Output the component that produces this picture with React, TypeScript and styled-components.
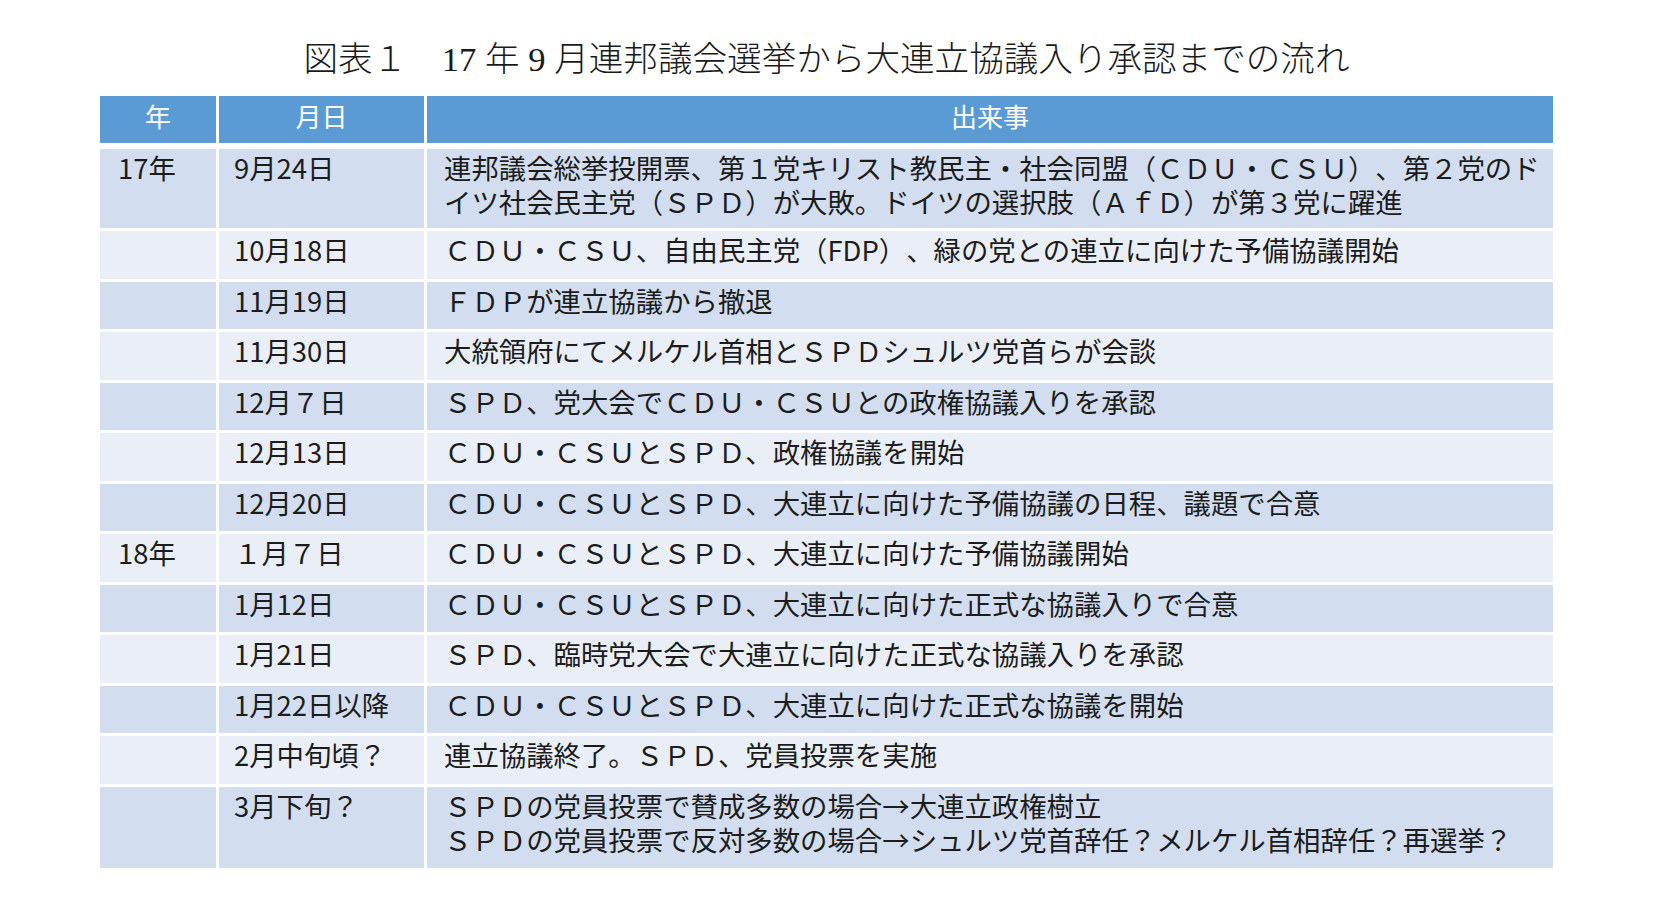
import styled, { createGlobalStyle } from "styled-components";

const GlobalStyle = createGlobalStyle`
  body {
    margin: 0;
    background: #ffffff;
  }
`

const Page = styled.div`
  width: 1658px;
  height: 908px;
  box-sizing: border-box;
  padding: 39px 105px 0 100px;
  background: #ffffff;
  font-family: "Noto Sans CJK JP", "Noto Sans", sans-serif;
  text-spacing-trim: space-all;
`

const Title = styled.h1`
  margin: 0 0 17px 0;
  height: 40px;
  line-height: 40px;
  text-align: center;
  font-family: "Liberation Serif", "Noto Sans CJK JP", serif;
  font-size: 34.6px;
  font-weight: 300;
  color: #1a1a1a;
  white-space: pre;
`

const Table = styled.div`
  display: flex;
  flex-direction: column;
  gap: 3px;
`

const Row = styled.div<{ $tone: "head" | "dark" | "light"; $h: number }>`
  display: grid;
  grid-template-columns: 116px 205px 1fr;
  column-gap: 3px;
  height: ${(p) => p.$h}px;
  margin-bottom: ${(p) => (p.$tone === "head" ? 3 : 0)}px;
  > div {
    background: ${(p) =>
      p.$tone === "head" ? "#5b9bd5" : p.$tone === "dark" ? "#d2deef" : "#eaeff7"};
  }
`

const HeadCell = styled.div`
  display: flex;
  align-items: center;
  justify-content: center;
  color: #ffffff;
  font-size: 26px;
  padding-bottom: 8px;
  box-sizing: border-box;
`

const Cell = styled.div<{ $pad?: number }>`
  box-sizing: border-box;
  padding: 1px 0 0 ${(p) => p.$pad ?? 16}px;
  font-size: 27.4px;
  line-height: 34px;
  color: #1c1c1c;
  white-space: nowrap;
`

const Line = styled.div`
  height: 34px;
`

type Item = { year?: string; date: string; lines: string[] }

const items: Item[] = [
  {
    year: "17年",
    date: "9月24日",
    lines: [
      "連邦議会総挙投開票、第１党キリスト教民主・社会同盟（ＣＤＵ・ＣＳＵ）、第２党のド",
      "イツ社会民主党（ＳＰＤ）が大敗。ドイツの選択肢（ＡｆＤ）が第３党に躍進",
    ],
  },
  { date: "10月18日", lines: ["ＣＤＵ・ＣＳＵ、自由民主党（FDP）、緑の党との連立に向けた予備協議開始"] },
  { date: "11月19日", lines: ["ＦＤＰが連立協議から撤退"] },
  { date: "11月30日", lines: ["大統領府にてメルケル首相とＳＰＤシュルツ党首らが会談"] },
  { date: "12月７日", lines: ["ＳＰＤ、党大会でＣＤＵ・ＣＳＵとの政権協議入りを承認"] },
  { date: "12月13日", lines: ["ＣＤＵ・ＣＳＵとＳＰＤ、政権協議を開始"] },
  { date: "12月20日", lines: ["ＣＤＵ・ＣＳＵとＳＰＤ、大連立に向けた予備協議の日程、議題で合意"] },
  { year: "18年", date: "１月７日", lines: ["ＣＤＵ・ＣＳＵとＳＰＤ、大連立に向けた予備協議開始"] },
  { date: "1月12日", lines: ["ＣＤＵ・ＣＳＵとＳＰＤ、大連立に向けた正式な協議入りで合意"] },
  { date: "1月21日", lines: ["ＳＰＤ、臨時党大会で大連立に向けた正式な協議入りを承認"] },
  { date: "1月22日以降", lines: ["ＣＤＵ・ＣＳＵとＳＰＤ、大連立に向けた正式な協議を開始"] },
  { date: "2月中旬頃？", lines: ["連立協議終了。ＳＰＤ、党員投票を実施"] },
  {
    date: "3月下旬？",
    lines: [
      "ＳＰＤの党員投票で賛成多数の場合→大連立政権樹立",
      "ＳＰＤの党員投票で反対多数の場合→シュルツ党首辞任？メルケル首相辞任？再選挙？",
    ],
  },
]

const rowHeight = (i: number, n: number) => {
  if (n > 1) return i === 0 ? 79 : 81
  return 47.5
}

const App = () => {
  return (
    <Page>
      <GlobalStyle />
      <Title>{"図表１　17 年 9 月連邦議会選挙から大連立協議入り承認までの流れ"}</Title>
      <Table>
        <Row $tone="head" $h={47}>
          <HeadCell>年</HeadCell>
          <HeadCell>月日</HeadCell>
          <HeadCell>出来事</HeadCell>
        </Row>
        {items.map((item, i) => (
          <Row key={i} $tone={i % 2 === 0 ? "dark" : "light"} $h={rowHeight(i, item.lines.length)}>
            <Cell $pad={18}>{item.year}</Cell>
            <Cell $pad={15}>{item.date}</Cell>
            <Cell $pad={17}>
              {item.lines.map((line, j) => (
                <Line key={j}>{line}</Line>
              ))}
            </Cell>
          </Row>
        ))}
      </Table>
    </Page>
  )
}

export default App
